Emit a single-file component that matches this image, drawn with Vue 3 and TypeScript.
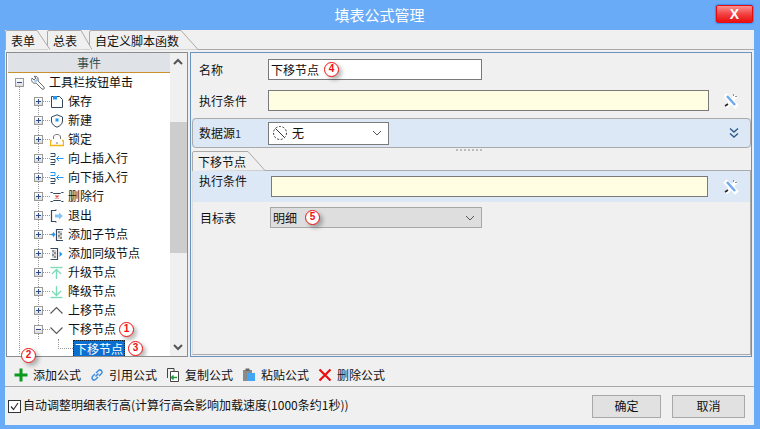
<script setup lang="ts">
interface Shape { d: string; s?: string; f?: string; w?: number }
interface Row { label: string; icon: Shape[]; open?: boolean; mark?: string }

const dark = '#34495e'
const blue = '#2196f3'
const mint = '#7fdcb8'

const rows: Row[] = [
  { label: '保存', icon: [{ d: 'M1.5 1.5H9.5L12.5 4.5V12.5H1.5Z', s: dark }, { d: 'M3 1H7V4.5H3Z', f: blue }] },
  { label: '新建', icon: [{ d: 'M7 .8L12.5 3V7C12.5 10 10 12 7 13.2C4 12 1.5 10 1.5 7V3Z', s: dark }, { d: 'M5.5 4.5H8.5V7.5H5.5Z', f: blue }] },
  { label: '锁定', icon: [{ d: 'M3.5 6V4C3.5 .6 10.5 .6 10.5 4V6', s: '#777' }, { d: 'M.5 7.5V12.5H13.5V7.5', s: '#f5b316', w: 1.4 }, { d: 'M.5 7.5H2M12 7.5H13.5', s: '#f5b316', w: 1.4 }, { d: 'M6 10H8', s: '#777' }] },
  { label: '向上插入行', icon: [{ d: 'M.5 1.5H5V4.5M.5 4.5H5M.5 7.5H5V10.5M.5 10.5H5M.5 12.5H5', s: dark }, { d: 'M13.5 6.5H6.5M9 4L6.5 6.5L9 9', s: blue }] },
  { label: '向下插入行', icon: [{ d: 'M.5 1.5H5V4.5M.5 4.5H5', s: blue }, { d: 'M.5 7.5H5V10.5M.5 10.5H5M.5 12.5H5', s: dark }, { d: 'M13.5 6.5H6.5M9 4L6.5 6.5L9 9', s: blue }] },
  { label: '删除行', icon: [{ d: 'M.5 2.5H2.5L3.5 3.5H10.5L11.5 2.5H13.5M.5 11.5H2.5L3.5 10.5H10.5L11.5 11.5H13.5', s: dark }, { d: 'M5.5 5.5L8.5 8.5M8.5 5.5L5.5 8.5', s: '#e8452c', w: 1.3 }] },
  { label: '退出', icon: [{ d: 'M6 1.5H1.5V12.5H6M6 1.5V.5M6 12.5V13.5', s: dark, w: 1.2 }, { d: 'M5 5.5H9V3.5L12.8 7L9 10.5V8.5H5Z', f: '#7fc4f5' }] },
  { label: '添加子节点', icon: [{ d: 'M0 6.5H2', s: '#8a8a8a' }, { d: 'M1.5 5.5H3V3.5L5.5 6.5L3 9.5V7.5H1.5Z', f: blue }, { d: 'M6 1H13V13H6Z', f: '#fff' }, { d: 'M8 3H10V5H8ZM10 5H12V7H10ZM8 7H10V9H8ZM10 9H12V11H10Z', f: '#8f8f8f' }, { d: 'M10 3H12V5H10ZM8 5H10V7H8ZM10 7H12V9H10ZM8 9H10V11H8Z', f: '#d0d0d0' }, { d: 'M13 1.5H6.5V12.5H13', s: dark, w: 1.2 }] },
  { label: '添加同级节点', icon: [{ d: 'M1 1H8V13H1Z', f: '#fff' }, { d: 'M2 3H4V5H2ZM4 5H6V7H4ZM2 7H4V9H2ZM4 9H6V11H4Z', f: '#8f8f8f' }, { d: 'M4 3H6V5H4ZM2 5H4V7H2ZM4 7H6V9H4ZM2 9H4V11H2Z', f: '#d0d0d0' }, { d: 'M.5 1.5H7.5V12.5H.5', s: dark, w: 1.2 }, { d: 'M9.5 4.5L12.5 7L9.5 10Z', f: blue }] },
  { label: '升级节点', icon: [{ d: 'M.5 1.5H12.5', s: mint, w: 1.4 }, { d: 'M6.5 13V4M2 8L6.5 3.5L11 8', s: mint, w: 1.4 }] },
  { label: '降级节点', icon: [{ d: 'M.5 12.5H12.5', s: mint, w: 1.4 }, { d: 'M6.5 1V10M2 6L6.5 10.5L11 6', s: mint, w: 1.4 }] },
  { label: '上移节点', icon: [{ d: 'M.5 9.5L6.5 3.5L12.5 9.5', s: '#555', w: 1.1 }] },
  { label: '下移节点', open: true, mark: '1', icon: [{ d: 'M.5 4.5L6.5 10.5L12.5 4.5', s: '#555', w: 1.1 }] }
]
</script>

<template>
  <div class="window">
    <header class="titlebar">
      <span class="title">填表公式管理</span>
      <span class="close">X</span>
    </header>

    <div class="client">
      <nav class="tabs">
        <div class="tab t1">
          <svg width="46" height="20"><path d="M.5 20V2Q.5 .5 2 .5H32L45 19.5" fill="#f0f0f0" stroke="#aaa" /></svg>
          <span>表单</span>
        </div>
        <div class="tab t2">
          <svg width="46" height="20"><path d="M.5 20V2Q.5 .5 2 .5H34L45 19.5" fill="#f0f0f0" stroke="#aaa" /></svg>
          <span>总表</span>
        </div>
        <div class="tab t3">
          <svg width="110" height="20"><path d="M.5 20V2Q.5 .5 2 .5H92L109 19.5" fill="#f0f0f0" stroke="#aaa" /></svg>
          <span>自定义脚本函数</span>
        </div>
      </nav>

      <div class="panes">
        <section class="left">
          <div class="left-main">
            <div class="head">事件</div>
            <div class="tree">
              <i class="guide g-root"></i>
              <i class="guide g-child"></i>
              <div class="row root">
                <span class="exp minus"></span>
                <svg class="ico wrench" width="16" height="16" viewBox="0 0 16 16">
                  <path d="M2 3L4 5L6 3L4 1.5C7 .5 9 3 8 6L14 12C15 13.5 13.5 15 12 14L6 8C3 9 .8 6.5 2 3Z" fill="#fff" stroke="#6b6b6b" />
                  <path d="M4 6L7 6L7 3" fill="none" stroke="#63a8ea" />
                </svg>
                <span class="txt">工具栏按钮单击</span>
              </div>
              <div v-for="r in rows" :key="r.label" class="row child">
                <span class="exp" :class="{ minus: r.open }"></span>
                <i class="link"></i>
                <svg class="ico" width="14" height="14" viewBox="0 0 14 14">
                  <path v-for="(p, i) in r.icon" :key="i" :d="p.d" :fill="p.f || 'none'" :stroke="p.s || 'none'" :stroke-width="p.w || 1" />
                </svg>
                <span class="lbl">{{ r.label }}</span>
                <b v-if="r.mark" class="mark">{{ r.mark }}</b>
              </div>
              <div class="row leaf">
                <i class="elbow"></i>
                <span class="sel">下移节点</span>
                <b class="mark">3</b>
              </div>
            </div>
          </div>
          <div class="scroll">
            <svg width="16" height="18" viewBox="0 0 16 18"><path d="M4 11L8 7L12 11" fill="none" stroke="#555" stroke-width="2" /></svg>
            <div class="track"><div class="thumb"></div></div>
            <svg width="16" height="18" viewBox="0 0 16 18"><path d="M4 7L8 11L12 7" fill="none" stroke="#555" stroke-width="2" /></svg>
          </div>
          <b class="mark float">2</b>
        </section>

        <section class="right">
          <div class="form-row first">
            <label>名称</label>
            <div class="input name">下移节点<b class="mark m4">4</b></div>
          </div>
          <div class="form-row second">
            <label>执行条件</label>
            <div class="input cond"></div>
            <svg class="tool" width="16" height="16" viewBox="0 0 16 16">
              <path d="M3 14L13 3" stroke="#fff" stroke-width="4" />
              <path d="M2 2L14 14" stroke="#fff" stroke-width="5" />
              <path d="M4 3L12 12" stroke="#6fa8ec" stroke-width="2.4" />
              <path d="M2 13L5 11" stroke="#222" stroke-width="1.6" />
              <path d="M10 2H11M13 3V4" stroke="#222" />
            </svg>
          </div>
          <div class="source">
            <div class="source-box">
              <label>数据源<em>1</em></label>
              <div class="input select small">
                <svg width="16" height="16" viewBox="0 0 16 16">
                  <circle cx="8" cy="8" r="6.5" fill="#fff" stroke="#333" stroke-dasharray="2 1.6" />
                  <path d="M3.5 3.5L12.5 12.5" stroke="#333" />
                </svg>
                <span>无</span>
                <svg class="caret" width="10" height="6" viewBox="0 0 10 6"><path d="M1 1L5 5L9 1" fill="none" stroke="#555" /></svg>
              </div>
              <svg class="dbl" width="12" height="12" viewBox="0 0 12 12">
                <path d="M2 1.5L6 5L10 1.5M2 6.5L6 10L10 6.5" fill="none" stroke="#2d5a8c" stroke-width="1.4" />
              </svg>
            </div>
            <div class="grip"><i v-for="n in 7" :key="n"></i></div>
          </div>

          <div class="sub">
            <div class="subtab">
              <svg width="74" height="20"><path d="M.5 20V2Q.5 .5 2 .5H56L73 19.5" fill="#f0f0f0" stroke="#aaa" /></svg>
              <span>下移节点</span>
            </div>
            <div class="pane">
              <div class="band">
                <label>执行条件</label>
                <div class="input cond2"></div>
                <svg class="tool" width="16" height="16" viewBox="0 0 16 16">
                  <path d="M3 14L13 3" stroke="#fff" stroke-width="4" />
                  <path d="M2 2L14 14" stroke="#fff" stroke-width="5" />
                  <path d="M4 3L12 12" stroke="#6fa8ec" stroke-width="2.4" />
                  <path d="M2 13L5 11" stroke="#222" stroke-width="1.6" />
                  <path d="M10 2H11M13 3V4" stroke="#222" />
                </svg>
              </div>
              <div class="target">
                <label>目标表</label>
                <div class="input target-sel">
                  <span>明细</span><b class="mark m5">5</b>
                  <svg class="caret" width="10" height="6" viewBox="0 0 10 6"><path d="M1 1L5 5L9 1" fill="none" stroke="#555" /></svg>
                </div>
              </div>
            </div>
          </div>
        </section>
      </div>

      <div class="toolbar">
        <span class="act">
          <svg width="14" height="14" viewBox="0 0 14 14"><path d="M5.5 .5H8.5V5.5H13.5V8.5H8.5V13.5H5.5V8.5H.5V5.5H5.5Z" fill="#0a9a1e" /></svg>添加公式
        </span>
        <span class="act">
          <svg width="14" height="14" viewBox="0 0 14 14"><path d="M5.5 8.5L8.5 5.5M5 6L2.5 8.5C.8 10.5 3.5 13.2 5.5 11.5L8 9M6 5L8.5 2.5C10.5.8 13.2 3.5 11.5 5.5L9 8" fill="none" stroke="#3f8fe0" stroke-width="1.5" /></svg>引用公式
        </span>
        <span class="act">
          <svg width="14" height="14" viewBox="0 0 14 14"><path d="M1.5 10V.5H8V4" fill="none" stroke="#444" /><path d="M4.5 3.5H12.5V13.5H4.5Z" fill="#fff" stroke="#444" /><path d="M6 9.5H11M7.5 7.5L5.5 9.5L7.5 11.5" fill="none" stroke="#1f9a3c" stroke-width="1.5" /></svg>复制公式
        </span>
        <span class="act">
          <svg width="14" height="14" viewBox="0 0 14 14"><path d="M1 2H10V13H1Z" fill="#8b8b8b" /><path d="M3.5 .5H7.5V3H3.5Z" fill="#666" /><path d="M5 5H13V13H5Z" fill="#42a5f5" /></svg>粘贴公式
        </span>
        <span class="act">
          <svg width="14" height="14" viewBox="0 0 14 14"><path d="M1.5 1.5L12.5 12.5M12.5 1.5L1.5 12.5" stroke="#e80f0f" stroke-width="2.2" /></svg>删除公式
        </span>
      </div>

      <footer class="footer">
        <span class="check">
          <svg width="13" height="13" viewBox="0 0 13 13"><path d="M3 6.5L5.5 9.5L10 3" fill="none" stroke="#333" stroke-width="1.2" /></svg>
        </span>
        <span class="note">自动调整明细表行高(计算行高会影响加载速度(1000条约1秒))</span>
        <button class="btn b1">确定</button>
        <button class="btn b2">取消</button>
      </footer>
    </div>
  </div>
</template>

<style>
html, body { margin: 0; background: #6aabf7; }
</style>

<style scoped>
* { box-sizing: border-box; }
.window {
  width: 760px; height: 429px; background: #6aabf7; display: flex; flex-direction: column;
  font: 12px/16px "Noto Sans CJK SC", "Liberation Sans", sans-serif; color: #111; overflow: hidden;
}
.titlebar { height: 30px; flex: none; position: relative; display: flex; justify-content: center; align-items: center; }
.title { color: #fff; font-size: 15px; margin-left: -1px; }
.close {
  position: absolute; left: 716px; top: 5px; width: 37px; height: 18px;
  border: 1px solid #e80c0c; border-radius: 2px; background: linear-gradient(#f9908f, #f23c3c 55%, #e81010);
  color: #fff; font: bold 14px/16px "Liberation Sans", sans-serif; text-align: center;
  box-shadow: 0 0 1px 1px #3f8cf0;
}
.client { flex: none; height: 395px; margin: 0 6px 0 5px; background: #f0f0f0; display: flex; flex-direction: column; }

.tabs { height: 20px; flex: none; display: flex; position: relative; border-bottom: 1px solid #aaa; }
.tab { position: relative; height: 20px; }
.tab svg { position: absolute; left: 0; top: 0; }
.tab span { position: relative; display: block; padding-top: 3px; }
.t1 { width: 46px; z-index: 3; } .t1 span { padding-left: 6px; }
.t2 { width: 46px; margin-left: -4px; z-index: 2; } .t2 span { padding-left: 6px; }
.t3 { width: 110px; margin-left: -4px; z-index: 1; } .t3 span { padding-left: 6px; }

.panes { flex: none; height: 306px; display: flex; padding: 2px 2px 0 1px; gap: 2px; }
.left { width: 182px; flex: none; border: 1px solid #8c8c8c; background: #fff; display: flex; position: relative; height: 305px; }
.left-main { width: 163px; display: flex; flex-direction: column; }
.head { height: 20px; margin-left: 1px; background: #dfe3e8; border-bottom: 1px solid #c8912e; text-align: center; color: #2f4f4f; line-height: 19px; font-size: 12px; }
.tree { position: relative; flex: 1; overflow: hidden; }
.guide { position: absolute; border-left: 1px dotted #999; }
.g-root { left: 12px; top: 14px; bottom: 2px; }
.g-child { left: 31px; top: 26px; height: 240px; }
.row { height: 19px; display: flex; align-items: center; position: relative; white-space: nowrap; }
.root { padding-left: 8px; }
.root .ico { margin: 0 3px 0 6px; }
.txt { position: relative; top: -1px; }
.child { padding-left: 27px; }
.exp {
  width: 9px; height: 9px; border: 1px solid #9a9a9a; background: linear-gradient(#fff, #dcdcdc); position: relative; flex: none; z-index: 1;
}
.exp::before { content: ""; position: absolute; left: 1px; top: 3px; width: 5px; height: 1px; background: #2d4a8a; }
.exp::after { content: ""; position: absolute; left: 3px; top: 1px; width: 1px; height: 5px; background: #2d4a8a; }
.exp.minus::after { display: none; }
.link { width: 7px; border-top: 1px dotted #999; flex: none; }
.ico { flex: none; }
.lbl { margin-left: 4px; position: relative; top: -1px; }
.leaf { padding-left: 51px; }
.elbow { width: 15px; height: 10px; margin-top: -10px; border-left: 1px dotted #999; border-bottom: 1px dotted #999; flex: none; }
.sel { background: #0b6fd1; color: #fff; outline: 1px dotted #222; outline-offset: -1px; padding: 0 2px; height: 18px; line-height: 17px; }

.mark {
  display: inline-block; width: 15px; height: 15px; margin-left: 3px; border: 1.5px solid #f01010; border-radius: 50%;
  background: #fff; color: #f01010; font: bold 10px/12px "Liberation Sans", sans-serif; text-align: center;
  box-shadow: 3px 3px 4px rgba(0, 0, 0, .28); flex: none;
}
.m4 { margin-left: 5px; }
.m5 { margin-left: 8px; }
.float { position: absolute; left: 14px; top: 295px; margin: 0; z-index: 4; }

.scroll { width: 17px; flex: none; background: #f0f0f0; display: flex; flex-direction: column; }
.scroll svg { flex: none; }
.track { flex: 1; }
.thumb { margin-top: 51px; height: 131px; background: #cdcdcd; }

.right { flex: 1; height: 305px; border: 1px solid #6b93bd; display: flex; flex-direction: column; padding: 0 0 1px 1px; }
.form-row { display: flex; align-items: center; height: 21px; flex: none; }
.first { margin-top: 6px; }
.second { margin-top: 10px; }
label { width: 76px; padding-left: 7px; flex: none; }
.input { height: 21px; border: 1px solid #7a7a7a; background: #fff; display: flex; align-items: center; padding-left: 2px; }
.name { width: 214px; }
.cond { width: 441px; background: #fffee3; }
.tool { margin-left: 14px; flex: none; }
.source { margin-top: 7px; height: 33px; flex: none; background: linear-gradient(#dde8f6 29px, #f0f0f0 29px); position: relative; }
.source-box { height: 30px; border: 1px solid #aaa; border-radius: 4px; background: #dde8f6; display: flex; align-items: center; }
.source-box label { width: 75px; padding-left: 6px; }
.source-box em { font-style: normal; font-size: 11px; color: #234; }
.select { position: relative; }
.small { width: 121px; height: 23px; gap: 4px; padding-left: 3px; }
.caret { position: absolute; right: 6px; top: 7px; }
.dbl { margin-left: auto; margin-right: 10px; }
.grip { display: flex; gap: 2px; justify-content: center; position: absolute; left: 264px; top: 31px; }
.grip i { width: 2px; height: 2px; background: #bbb; }

.sub { flex: 1; display: flex; flex-direction: column; position: relative; }
.subtab { height: 20px; position: relative; flex: none; margin-bottom: -1px; z-index: 1; }
.subtab svg { position: absolute; left: 0; top: 0; }
.subtab span { position: relative; display: block; padding: 3px 0 0 6px; }
.pane { flex: 1; border: 1px solid #aaa; border-left-color: #ddd; display: flex; flex-direction: column; }
.band { height: 31px; background: #dde8f6; display: flex; align-items: center; flex: none; }
.band label { width: 78px; padding: 0 0 11px 6px; }
.cond2 { width: 437px; background: #fffee3; }
.band .tool { margin-left: 15px; }
.target { display: flex; align-items: center; margin-top: 5px; height: 21px; }
.target label { width: 77px; }
.target-sel { width: 212px; background: #dedede; border-color: #a8a8a8; position: relative; }

.toolbar { flex: 1; display: flex; align-items: center; padding: 8px 0 0 9px; gap: 9px; border-bottom: 1px solid #a8a8a8; }
.act { display: inline-flex; align-items: center; gap: 5px; }
.footer { height: 38px; flex: none; display: flex; align-items: center; padding: 0 9px 0 3px; }
.check { width: 13px; height: 13px; border: 1px solid #333; background: #fff; flex: none; display: flex; margin-right: 2px; }
.check svg { margin: -1px; flex: none; }
.note { flex: 1; white-space: nowrap; position: relative; top: -1px; }
.btn {
  height: 23px; border: 1px solid #a8a8a8; background: #e1e1e1; padding: 0;
  font: inherit; color: #111;
}
.b1 { width: 69px; }
.b2 { width: 73px; margin-left: 11px; }
</style>
